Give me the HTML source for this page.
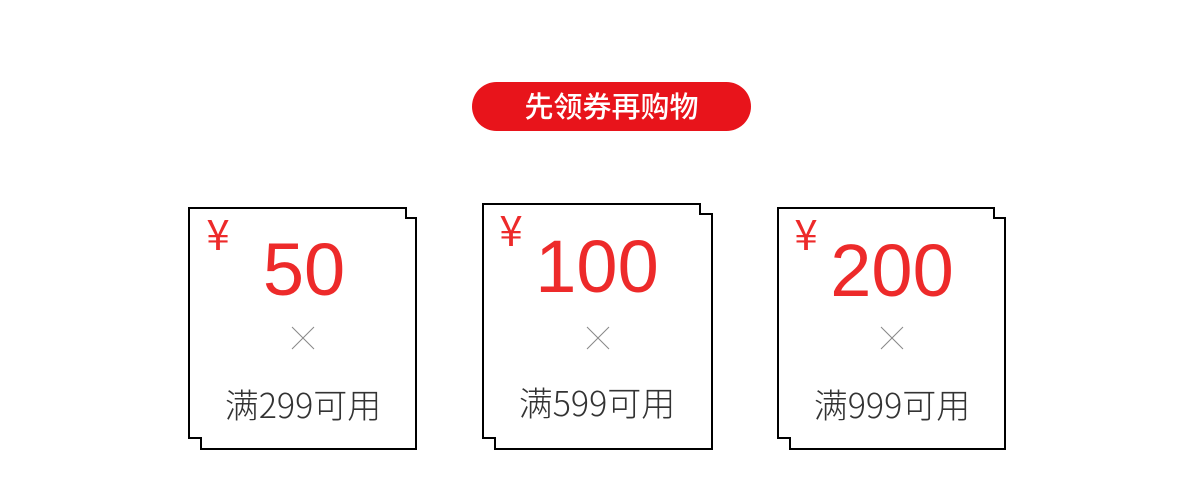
<!DOCTYPE html>
<html><head><meta charset="utf-8"><style>
html,body{margin:0;padding:0;background:#fff;width:1200px;height:497px;overflow:hidden}
svg{display:block}
</style></head><body>
<svg width="1200" height="497" viewBox="0 0 1200 497" xmlns="http://www.w3.org/2000/svg">
<rect x="472" y="82" width="279" height="49" rx="24.5" fill="#e8141b"/>
<text x="611.5" y="117" text-anchor="middle" fill="#fff" font-family="Noto Sans CJK SC, sans-serif" font-size="29" font-weight="500">先领券再购物</text>
<g fill="none" stroke="#000" stroke-width="2">
<path d="M189 208H406V218H416V449H201V438H189Z"/>
<path d="M483 204H700V214H712V449H495V438H483Z"/>
<path d="M778 208H994V218H1005V449H790V438H778Z"/>
</g>
<g fill="#ed2a2a" font-family="Noto Sans CJK SC, sans-serif">
<text x="218" y="250" text-anchor="middle" font-size="42">¥</text>
<text x="511" y="246" text-anchor="middle" font-size="42">¥</text>
<text x="806" y="250" text-anchor="middle" font-size="42">¥</text>
</g>
<g fill="#ed2a2a" font-family="Liberation Sans, sans-serif">
<text x="304" y="295" text-anchor="middle" font-size="74">50</text>
<text x="597" y="292" text-anchor="middle" font-size="74">100</text>
<text x="892" y="296" text-anchor="middle" font-size="74">200</text>
</g>
<g stroke="#888" stroke-width="1">
<path d="M292 327L314 349M314 327L292 349"/>
<path d="M587 327L609 349M609 327L587 349"/>
<path d="M881 327L903 349M903 327L881 349"/>
</g>
<g fill="#333" font-family="Noto Sans CJK SC, sans-serif" font-size="34" font-weight="300" text-anchor="middle">
<text x="303" y="418">满299可用</text>
<text x="597" y="416">满599可用</text>
<text x="892" y="418">满999可用</text>
</g>
</svg>
</body></html>
